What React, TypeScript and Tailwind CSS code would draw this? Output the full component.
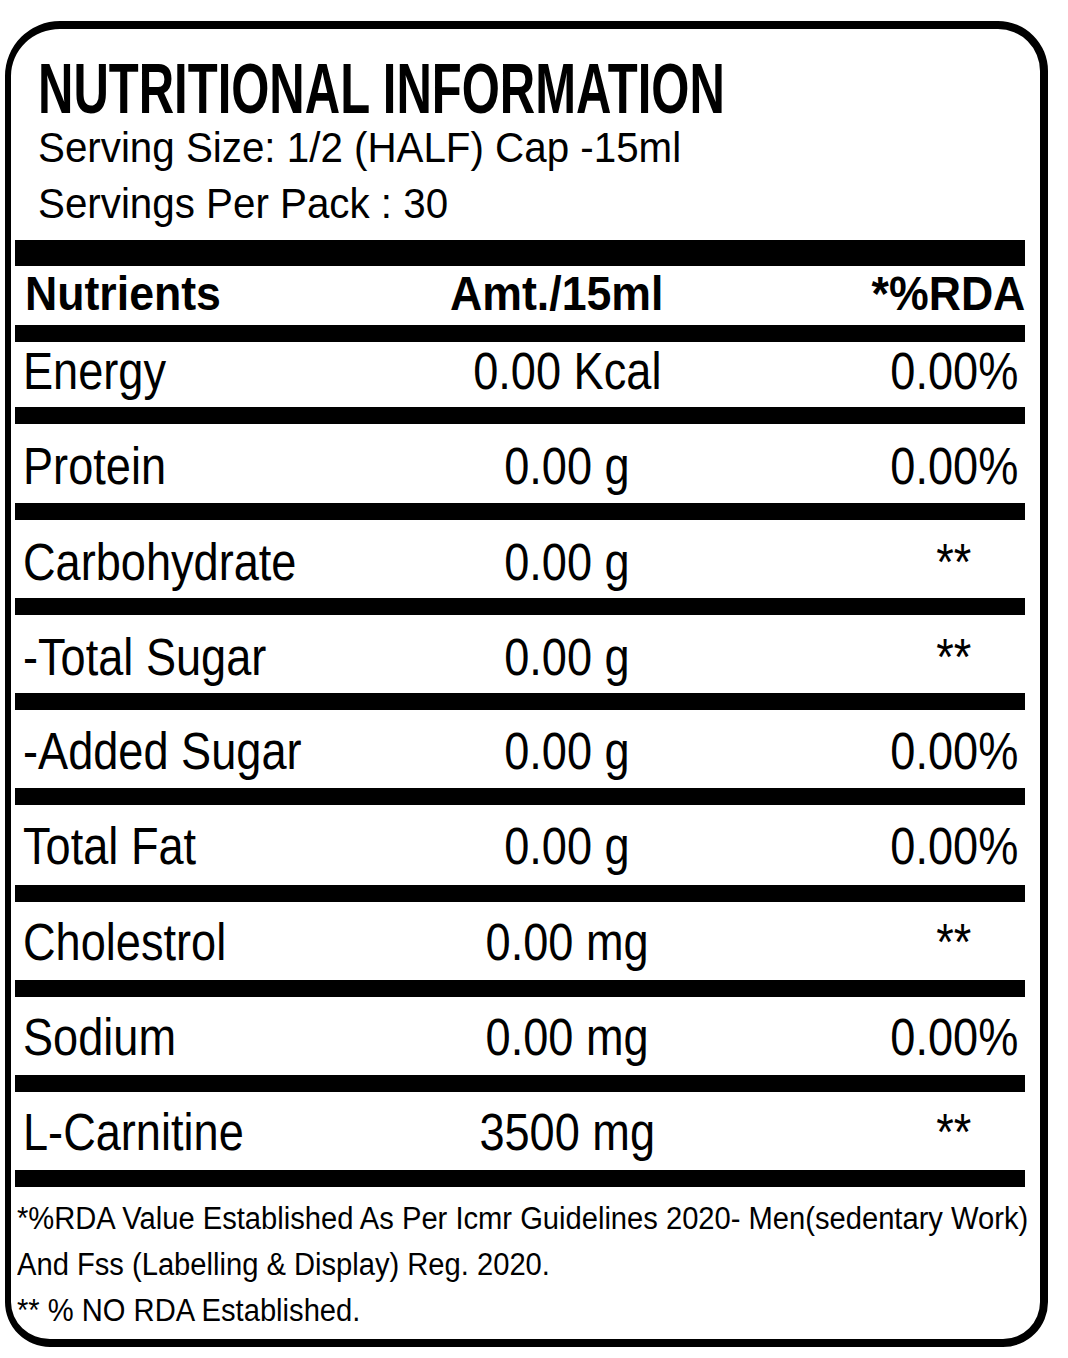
import React from "react";

type Row = { name: string; amt: string; rda: string; pad: string };

const ROWS: Row[] = [
  { name: "Energy", amt: "0.00 Kcal", rda: "0.00%", pad: "pt-[4px] pb-[10px]" },
  { name: "Protein", amt: "0.00 g", rda: "0.00%", pad: "pt-[17px] pb-[11px]" },
  { name: "Carbohydrate", amt: "0.00 g", rda: "**", pad: "pt-[17px] pb-[10px]" },
  { name: "-Total Sugar", amt: "0.00 g", rda: "**", pad: "pt-[17px] pb-[10px]" },
  { name: "-Added Sugar", amt: "0.00 g", rda: "0.00%", pad: "pt-[16px] pb-[11px]" },
  { name: "Total Fat", amt: "0.00 g", rda: "0.00%", pad: "pt-[16px] pb-[13px]" },
  { name: "Cholestrol", amt: "0.00 mg", rda: "**", pad: "pt-[15px] pb-[12px]" },
  { name: "Sodium", amt: "0.00 mg", rda: "0.00%", pad: "pt-[15px] pb-[12px]" },
  { name: "L-Carnitine", amt: "3500 mg", rda: "**", pad: "pt-[15px] pb-[12px]" },
];

function Bar({ thick }: { thick?: boolean }) {
  return <div className={`w-[1010px] bg-black ${thick ? "h-[26px]" : "h-[17px]"}`} />;
}

function NutrientRow({ row }: { row: Row }) {
  return (
    <div className={`grid w-[1010px] grid-cols-[402px_300px_166px_142px] text-[51px] leading-none ${row.pad}`}>
      <div className="pl-[8px]">
        <span className="block origin-left scale-x-[0.885] whitespace-nowrap">{row.name}</span>
      </div>
      <div className="flex justify-center">
        <span className="shrink-0 whitespace-nowrap scale-x-[0.885]">{row.amt}</span>
      </div>
      <div className="col-start-4 flex justify-center">
        <span className="shrink-0 whitespace-nowrap scale-x-[0.885]">{row.rda}</span>
      </div>
    </div>
  );
}

export default function App() {
  return (
    <div className="w-[1068px] h-[1358px] overflow-hidden bg-white pt-[21px] font-['Liberation_Sans',Arial,sans-serif] text-black">
      <div className="ml-[5px] w-[1043px] h-[1326px] border-[8px] border-l-[6px] border-black rounded-tl-[55px] rounded-tr-[50px] rounded-b-[45px] pl-[4px]">
        {/* Heading */}
        <div className="pl-[23px] pt-[25px]">
          <h1 className="text-[70px] font-bold leading-none">
            <span className="block origin-left scale-x-[0.70] whitespace-nowrap">NUTRITIONAL INFORMATION</span>
          </h1>
          <p className="mt-[3px] text-[42px] leading-none">
            <span className="block origin-left scale-x-[0.96] whitespace-nowrap">Serving Size: 1/2 (HALF) Cap -15ml</span>
          </p>
          <p className="mt-[14px] text-[42px] leading-none">
            <span className="block origin-left scale-x-[0.96] whitespace-nowrap">Servings Per Pack : 30</span>
          </p>
        </div>

        <div className="mt-[15px]">
          <Bar thick />
          {/* Column headings */}
          <div className="grid w-[1010px] grid-cols-[402px_300px_166px_142px] pt-[4px] pb-[7px] text-[48px] font-bold leading-none">
            <div className="pl-[10px]">
              <span className="block origin-left scale-x-[0.93] whitespace-nowrap">Nutrients</span>
            </div>
            <div className="flex justify-center pr-[20px]">
              <span className="shrink-0 whitespace-nowrap scale-x-[0.93]">Amt./15ml</span>
            </div>
            <div className="col-span-2 col-start-3 flex justify-end">
              <span className="shrink-0 origin-right whitespace-nowrap scale-x-[0.93]">*%RDA</span>
            </div>
          </div>
          <Bar />
          {ROWS.map((row) => (
            <div key={row.name}>
              <NutrientRow row={row} />
              <Bar />
            </div>
          ))}
        </div>

        {/* Footnotes */}
        <div className="pl-[2px] pt-[9px] text-[31px] leading-[46px]">
          <span className="block origin-left scale-x-[0.94] whitespace-nowrap">
            *%RDA Value Established As Per Icmr Guidelines 2020- Men(sedentary Work)
          </span>
          <span className="block origin-left scale-x-[0.94] whitespace-nowrap">
            And Fss (Labelling &amp; Display) Reg. 2020.
          </span>
          <span className="block origin-left scale-x-[0.94] whitespace-nowrap">** % NO RDA Established.</span>
        </div>
      </div>
    </div>
  );
}
